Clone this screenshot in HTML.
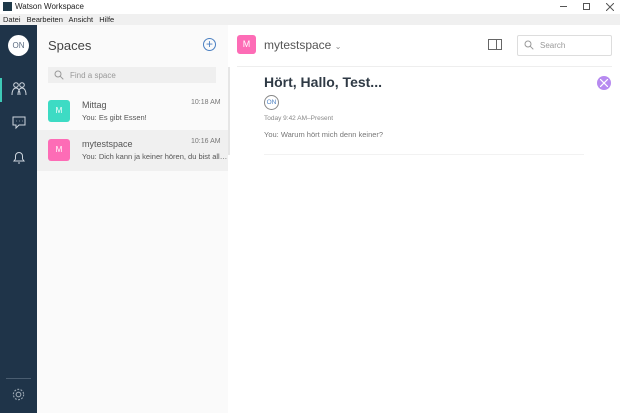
<!DOCTYPE html>
<html><head><meta charset="utf-8"><style>
*{margin:0;padding:0;box-sizing:border-box}
body{width:620px;height:413px;overflow:hidden;font-family:"Liberation Sans",sans-serif;background:#fff;position:relative}
.abs{position:absolute}
.t{font-size:8px;color:#555}
</style></head><body>
<div class="abs" style="left:0;top:0;width:620px;height:14px;background:#fff"></div>
<div class="abs" style="left:3px;top:2px;width:9px;height:9px;background:#1f3a4a"></div>
<div class="abs" style="left:15px;top:2px;font-size:8px;color:#222">Watson Workspace</div>
<div class="abs" style="left:560px;top:6px;width:7px;height:1px;background:#555"></div>
<div class="abs" style="left:583px;top:3px;width:7px;height:7px;border:1px solid #555"></div>
<svg class="abs" style="left:606px;top:3px" width="8" height="8" viewBox="0 0 8 8" stroke="#555"><path d="M0 0l8 8M8 0L0 8"/></svg>
<div class="abs" style="left:0;top:14px;width:620px;height:11px;background:#f0f0f0;font-size:7.5px;color:#222;line-height:11px;padding-left:3px;word-spacing:4px">Datei Bearbeiten Ansicht Hilfe</div>

<div class="abs" style="left:0;top:25px;width:37px;height:388px;background:#1f3449"></div>
<div class="abs" style="left:8px;top:35px;width:21px;height:21px;border-radius:50%;background:#fff;font-size:8px;color:#5a6b80;text-align:center;line-height:21px">ON</div>
<div class="abs" style="left:0;top:78px;width:2px;height:24px;background:#3ec9b7"></div>
<svg class="abs" style="left:10px;top:80px" width="18" height="18" viewBox="0 0 18 18" fill="none" stroke="#cfd6de" stroke-width="1"><circle cx="6" cy="5" r="2.3"/><circle cx="12" cy="5" r="2.3"/><path d="M2 15c0-5 2-7 4-7s4 2 4 7M8 15c0-5 2-7 4-7s4 2 4 7"/></svg>
<svg class="abs" style="left:11px;top:115px" width="16" height="15" viewBox="0 0 16 15" fill="none" stroke="#cfd6de" stroke-width="1"><path d="M2 2h12v8H8l-3 3v-3H2z"/><path d="M5 6h.5M8 6h.5M11 6h.5"/></svg>
<svg class="abs" style="left:11px;top:149px" width="16" height="16" viewBox="0 0 16 16" fill="none" stroke="#cfd6de" stroke-width="1"><path d="M3 12h10l-1.5-2V7a3.5 3.5 0 0 0-7 0v3z"/><path d="M7 14h2"/></svg>
<div class="abs" style="left:6px;top:378px;width:25px;height:1px;background:#4a5d70"></div>
<svg class="abs" style="left:11px;top:387px" width="15" height="15" viewBox="0 0 16 16" fill="none" stroke="#9aa6b2" stroke-width="1.2"><circle cx="8" cy="8" r="2.5"/><circle cx="8" cy="8" r="5.5" stroke-dasharray="2 1.5"/></svg>

<div class="abs" style="left:37px;top:25px;width:191px;height:388px;background:#fafafa"></div>
<div class="abs" style="left:48px;top:38px;font-size:13px;color:#444">Spaces</div>
<div class="abs" style="left:203px;top:38px;width:13px;height:13px;border:1.3px solid #4a7fc1;border-radius:50%;color:#4a7fc1;font-size:12px;line-height:10px;text-align:center">+</div>
<div class="abs" style="left:48px;top:67px;width:168px;height:16px;background:#efefef"></div>
<svg class="abs" style="left:54px;top:70px" width="10" height="10" viewBox="0 0 10 10" fill="none" stroke="#999"><circle cx="4" cy="4" r="3"/><path d="M6.3 6.3l3 3"/></svg>
<div class="abs t" style="left:70px;top:71px;color:#999">Find a space</div>
<div class="abs" style="left:228px;top:67px;width:2px;height:88px;background:#e6e6e6"></div>

<div class="abs" style="left:48px;top:100px;width:22px;height:22px;background:#3ddbc4;border-radius:3px;color:#fff;font-size:8px;text-align:center;line-height:22px">M</div>
<div class="abs" style="left:82px;top:100px;font-size:9px;color:#555">Mittag</div>
<div class="abs t" style="left:191px;top:99px;font-size:7px;color:#777">10:18 AM</div>
<div class="abs t" style="left:82px;top:113px;font-size:7.5px">You: Es gibt Essen!</div>

<div class="abs" style="left:37px;top:130px;width:191px;height:41px;background:#f0f0f0"></div>
<div class="abs" style="left:48px;top:139px;width:22px;height:22px;background:#fd6cb6;border-radius:3px;color:#fff;font-size:8px;text-align:center;line-height:22px">M</div>
<div class="abs" style="left:82px;top:139px;font-size:9px;color:#555">mytestspace</div>
<div class="abs t" style="left:191px;top:138px;font-size:7px;color:#777">10:16 AM</div>
<div class="abs t" style="left:82px;top:152px;font-size:7.5px">You: Dich kann ja keiner hören, du bist all…</div>

<div class="abs" style="left:237px;top:35px;width:19px;height:19px;background:#fd6cb6;border-radius:3px;color:#fff;font-size:9px;text-align:center;line-height:19px">M</div>
<div class="abs" style="left:264px;top:38px;font-size:12px;color:#555">mytestspace <span style="font-size:8px;color:#888">⌄</span></div>
<div class="abs" style="left:488px;top:39px;width:14px;height:11px;border:1px solid #666"></div>
<div class="abs" style="left:496px;top:39px;width:1px;height:11px;background:#666"></div>
<div class="abs" style="left:517px;top:35px;width:95px;height:21px;border:1px solid #ddd;border-radius:2px"></div>
<svg class="abs" style="left:524px;top:40px" width="10" height="10" viewBox="0 0 10 10" fill="none" stroke="#999"><circle cx="4" cy="4" r="3"/><path d="M6.3 6.3l3 3"/></svg>
<div class="abs" style="left:540px;top:41px;font-size:8px;color:#999">Search</div>
<div class="abs" style="left:237px;top:66px;width:375px;height:1px;background:#eee"></div>

<div class="abs" style="left:264px;top:74px;font-size:14px;font-weight:bold;color:#2f3a45">Hört, Hallo, Test...</div>
<div class="abs" style="left:597px;top:76px;width:14px;height:14px;border-radius:50%;background:#b78af0"></div>
<svg class="abs" style="left:600px;top:79px" width="8" height="8" viewBox="0 0 8 8" stroke="#fff" stroke-width="1.2"><path d="M0 0l8 8M8 0L0 8"/></svg>
<div class="abs" style="left:264px;top:95px;width:15px;height:15px;border:1px solid #888;border-radius:50%;font-size:6.5px;color:#4a7fc1;text-align:center;line-height:13px">ON</div>
<div class="abs" style="left:264px;top:115px;font-size:6.5px;color:#888">Today 9:42 AM–Present</div>
<div class="abs" style="left:264px;top:130px;font-size:7.5px;color:#777">You: Warum hört mich denn keiner?</div>
<div class="abs" style="left:264px;top:154px;width:320px;height:1px;background:#f2f2f2"></div>
</body></html>
